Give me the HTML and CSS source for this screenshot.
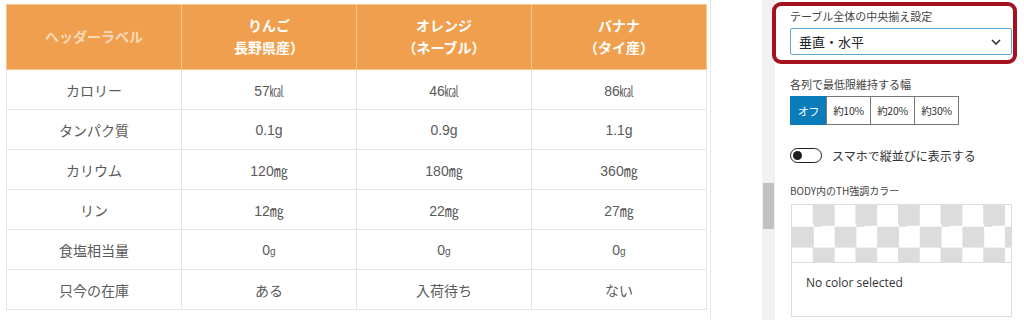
FILE: index.html
```html
<!DOCTYPE html>
<html lang="ja">
<head>
    <meta charset="UTF-8">
    <title>テーブル設定</title>
    <link rel="stylesheet" href="styles.css">
</head>
<body>
<div class="page">
    <div class="canvas">
        <table class="fruit-table">
            <thead>
                <tr>
                    <th class="th-label">ヘッダーラベル</th>
                    <th>りんご<br>長野県産）</th>
                    <th>オレンジ<br>（ネーブル）</th>
                    <th>バナナ<br>（タイ産）</th>
                </tr>
            </thead>
            <tbody>
                <tr><td>カロリー</td><td>57㎉</td><td>46㎉</td><td>86㎉</td></tr>
                <tr><td>タンパク質</td><td>0.1g</td><td>0.9g</td><td>1.1g</td></tr>
                <tr><td>カリウム</td><td>120㎎</td><td>180㎎</td><td>360㎎</td></tr>
                <tr><td>リン</td><td>12㎎</td><td>22㎎</td><td>27㎎</td></tr>
                <tr><td>食塩相当量</td><td>0<small>g</small></td><td>0<small>g</small></td><td>0<small>g</small></td></tr>
                <tr><td>只今の在庫</td><td>ある</td><td>入荷待ち</td><td>ない</td></tr>
            </tbody>
        </table>
    </div>
    <div class="gutter"></div>
    <div class="scrollbar"><div class="scrollbar__thumb"></div></div>
    <div class="sidebar">
        <div class="highlight">
            <div class="field__label">テーブル全体の中央揃え設定</div>
            <div class="select">
                <span>垂直・水平</span>
                <svg width="10" height="6" viewBox="0 0 10 6"><polyline points="1,1 5,5 9,1" fill="none" stroke="#333" stroke-width="1.6"/></svg>
            </div>
        </div>
        <div class="field__label field__label--gap">各列で最低限維持する幅</div>
        <div class="btn-group">
            <div class="btn btn--active">オフ</div>
            <div class="btn">約10%</div>
            <div class="btn">約20%</div>
            <div class="btn">約30%</div>
        </div>
        <div class="toggle-row">
            <span class="toggle"><span class="toggle__knob"></span></span>
            <span class="toggle__text">スマホで縦並びに表示する</span>
        </div>
        <div class="field__label field__label--small">BODY内のTH強調カラー</div>
        <div class="color-box">
            <div class="checker"></div>
            <div class="color-box__text">No color selected</div>
        </div>
    </div>
</div>
</body>
</html>
```
FILE: styles.css
```css
html{
    font-family: "Liberation Sans", "Noto Sans CJK JP", sans-serif;
}
body{
    margin: 0;
    width: 1024px;
    height: 320px;
    overflow: hidden;
    background: #fff;
}
.page{
    display: flex;
    height: 320px;
}
.canvas{
    width: 711px;
    padding: 4px 0 0 6px;
    box-sizing: border-box;
    border-right: 1px dotted #cfcfcf;
}
.fruit-table{
    width: 701px;
    border-collapse: collapse;
    table-layout: fixed;
    font-size: 14px;
    color: #5a5a5a;
}
.fruit-table th{
    background: #ef9f4d;
    color: #fff;
    font-weight: bold;
    height: 64px;
    line-height: 22px;
    border: 1px solid #f5c592;
    padding: 0;
}
.fruit-table th.th-label{
    color: rgba(255,255,255,.62);
}
.fruit-table td{
    height: 39px;
    text-align: center;
    border: 1px solid #e4e4e4;
    padding: 0;
}
.fruit-table small{
    font-size: 10px;
}
.gutter{
    width: 51px;
}
.scrollbar{
    width: 13px;
    background: #f1f1f1;
}
.scrollbar__thumb{
    margin: 183px 1px 0 1px;
    height: 46px;
    background: #c1c1c1;
}
.sidebar{
    width: 248px;
    padding: 0 11px 0 15px;
    box-sizing: border-box;
    font-family: "Noto Sans CJK JP", sans-serif;
    color: #3c3c3c;
}
.highlight{
    margin: 2px -5px 0 -18px;
    padding: 2px 1px 5px 14px;
    border: 4px solid #a5111f;
    border-radius: 9px;
    position: relative;
    background: #fff;
}
.field__label{
    font-size: 11px;
    line-height: 16px;
    color: #444;
}
.field__label--gap{
    margin-top: 12px;
}
.field__label--small{
    font-size: 10px;
    margin-top: 18px;
}
.select{
    margin-top: 4px;
    height: 27px;
    border: 1px solid #5fa8d3;
    border-radius: 2px;
    box-sizing: border-box;
    display: flex;
    align-items: center;
    justify-content: space-between;
    padding: 0 10px 0 8px;
    font-size: 13px;
    color: #222;
}
.btn-group{
    display: flex;
    margin-top: 4px;
}
.btn{
    width: 45px;
    height: 29px;
    box-sizing: border-box;
    border: 1px solid #777;
    margin-left: -1px;
    font-size: 10.5px;
    display: flex;
    align-items: center;
    justify-content: center;
    background: #fff;
    color: #333;
    letter-spacing: -0.3px;
}
.btn:first-child{
    margin-left: 0;
}
.btn--active{
    width: 37px;
    background: #0a7cba;
    border-color: #0a7cba;
    color: #fff;
    font-size: 11px;
}
.toggle-row{
    display: flex;
    align-items: center;
    margin-top: 20px;
    height: 20px;
}
.toggle{
    width: 32px;
    height: 15px;
    box-sizing: border-box;
    border: 1.5px solid #1e1e1e;
    border-radius: 8px;
    display: flex;
    align-items: center;
    padding-left: 2px;
}
.toggle__knob{
    width: 9px;
    height: 9px;
    border-radius: 50%;
    background: #1e1e1e;
}
.toggle__text{
    margin-left: 10px;
    font-size: 12px;
    color: #333;
}
.color-box{
    margin-top: 5px;
    width: 221px;
    height: 113px;
    border: 1px solid #ddd;
    box-sizing: border-box;
    margin-left: 1px;
}
.checker{
    height: 57px;
    border-bottom: 1px solid #ddd;
    background: repeating-conic-gradient(#dcdcdc 0 25%, #fff 0 50%) 0 0 / 42.6px 42.6px;
}
.color-box__text{
    padding: 11px 0 0 14px;
    font-family: "Open Sans", sans-serif;
    font-size: 12px;
    color: #333;
}
```
